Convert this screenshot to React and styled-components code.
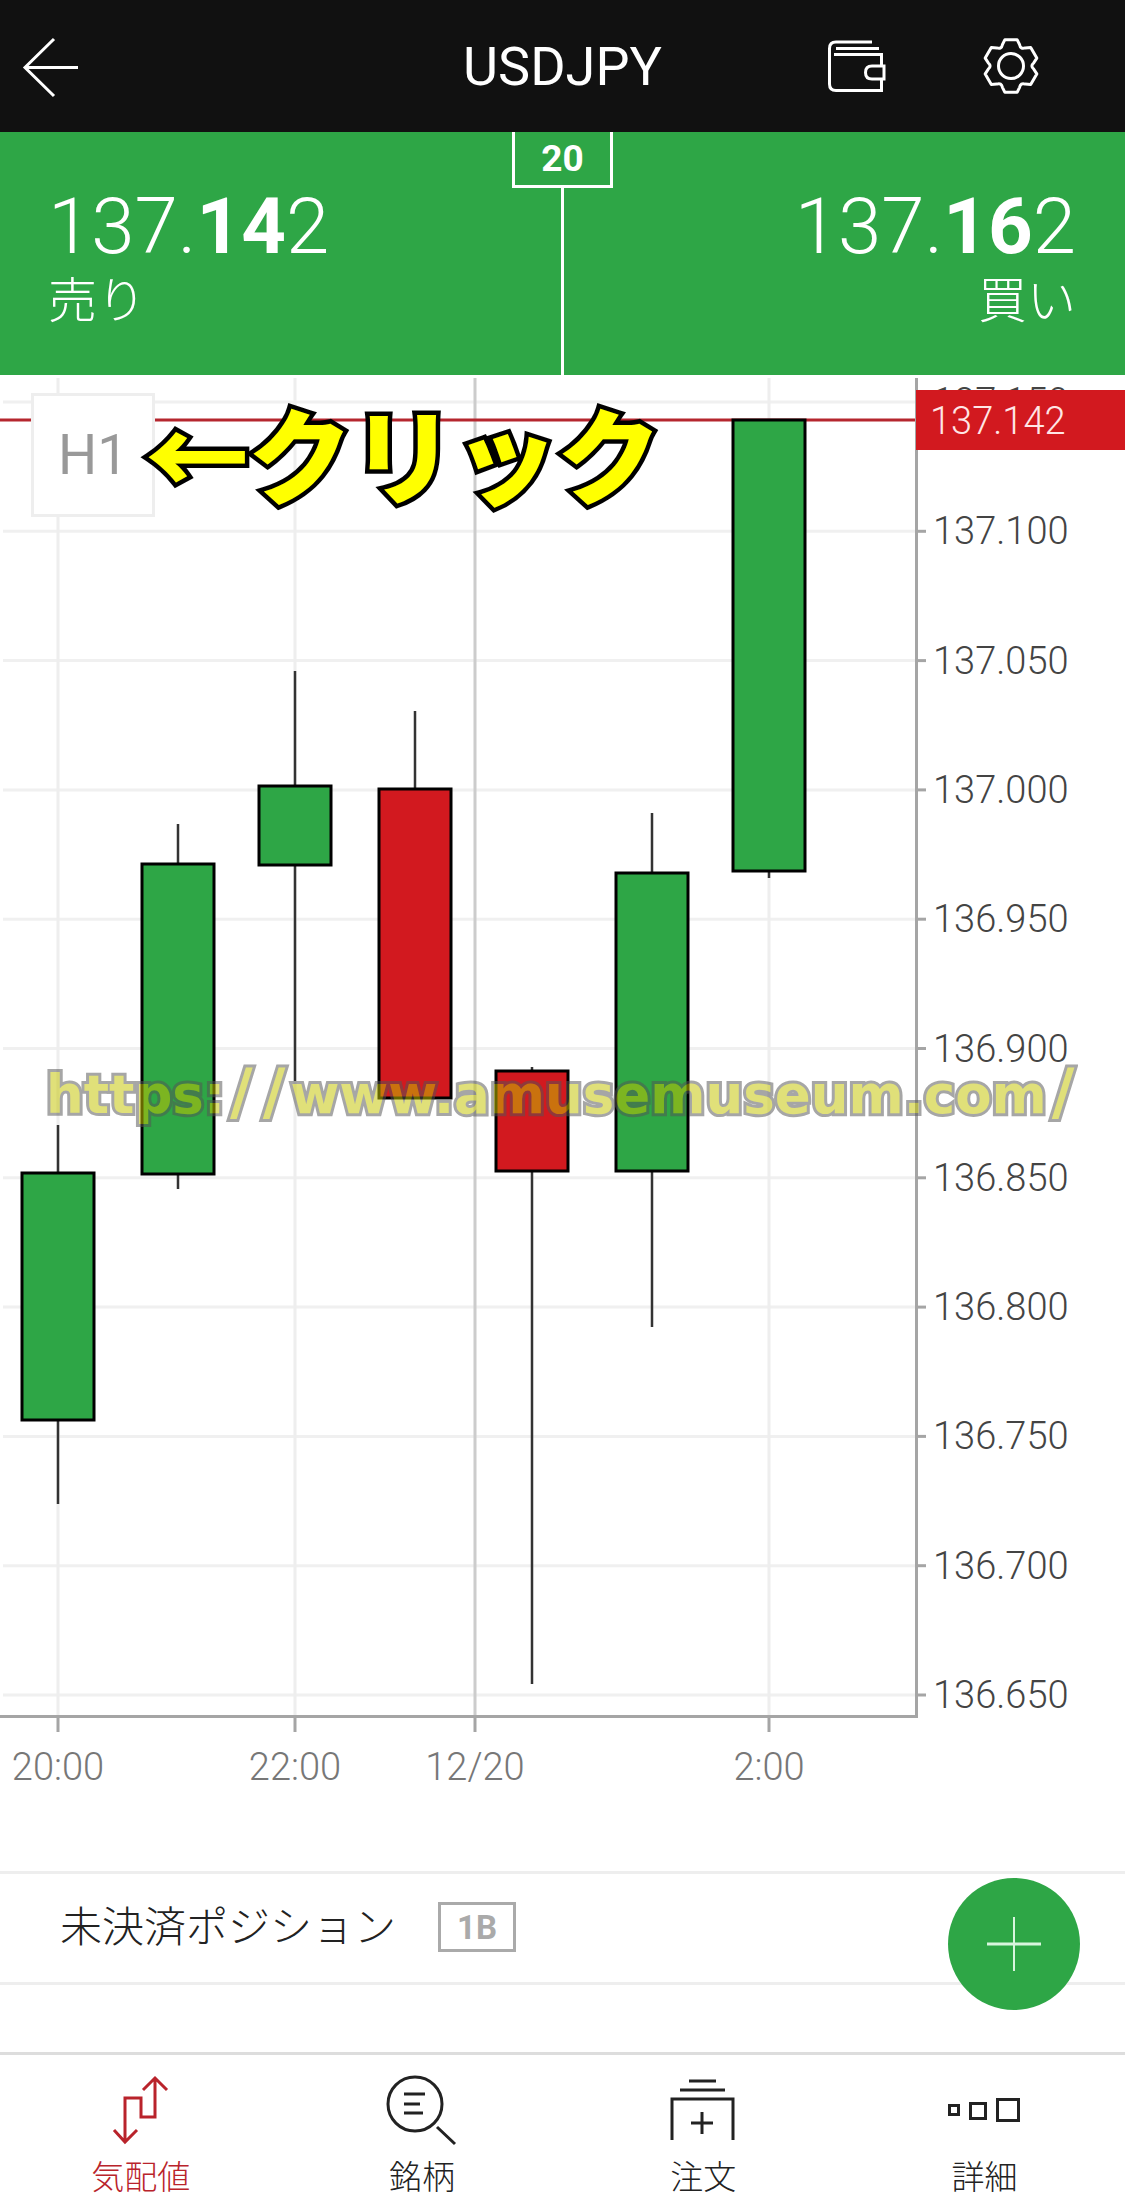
import React from 'react'
import styled, { createGlobalStyle } from 'styled-components'

const GlobalStyle = createGlobalStyle`
  html, body { margin: 0; padding: 0; background: #fff; }
  body { font-family: Roboto, "Noto Sans CJK JP", sans-serif; }
`

const GREEN = '#2ea646'
const RED = '#d2191f'

const Page = styled.div`
  position: relative;
  width: 1125px;
  height: 2202px;
  display: flex;
  flex-direction: column;
  overflow: hidden;
  background: #fff;
`

const Header = styled.header`
  height: 132px;
  background: #111;
  display: grid;
  grid-template-columns: 1fr auto 1fr;
  align-items: center;
  color: #fff;
`

const Title = styled.h1`
  margin: 0;
  font-size: 54px;
  font-weight: 400;
`

const HeaderLeft = styled.div`
  display: flex;
  align-items: center;
`

const HeaderRight = styled.div`
  display: flex;
  justify-content: flex-end;
  align-items: center;
  gap: 95px;
  padding-right: 84px;
`

const QuotePanel = styled.section`
  position: relative;
  height: 243px;
  background: ${GREEN};
  color: #fff;
  display: flex;
  justify-content: space-between;
  padding: 50px 49px 0 48px;
  box-sizing: border-box;
`

const Spread = styled.div`
  position: absolute;
  top: 0;
  left: 512px;
  width: 101px;
  height: 56px;
  box-sizing: border-box;
  border: 3px solid #fff;
  border-top: 0;
  display: flex;
  align-items: center;
  justify-content: center;
  font-size: 37px;
  font-weight: 700;
`

const Divider = styled.div`
  position: absolute;
  top: 56px;
  bottom: 0;
  left: 561px;
  width: 3px;
  background: #fff;
`

const Quote = styled.div`
  display: flex;
  flex-direction: column;
  align-items: ${props => (props.$right ? 'flex-end' : 'flex-start')};
`

const Price = styled.div`
  font-size: 78px;
  line-height: 90px;
  font-weight: 300;
  b { font-weight: 700; }
`

const Side = styled.div`
  font-size: 49px;
  line-height: 60px;
  font-weight: 300;
`

const ChartArea = styled.section`
  position: relative;
  height: 1496px;
`

const ChartSvg = styled.svg`
  display: block;
`

const AxisText = styled.text`
  font-family: Roboto, sans-serif;
  font-size: 38px;
  font-weight: 300;
  fill: ${props => props.$color};
`

const FrameButton = styled.div`
  position: absolute;
  left: 31px;
  top: 18px;
  width: 124px;
  height: 124px;
  box-sizing: border-box;
  border: 3px solid #eee;
  background: #fff;
  display: flex;
  align-items: center;
  justify-content: center;
  color: #999;
  font-size: 55px;
`

const ClickNote = styled.div`
  position: absolute;
  left: 145px;
  top: 12px;
  font-family: "Noto Sans CJK JP", sans-serif;
  font-size: 104px;
  line-height: 130px;
  font-weight: 900;
  letter-spacing: -1px;
  white-space: nowrap;
  color: #ff0;
  -webkit-text-stroke: 9px #000;
  paint-order: stroke fill;
`

const Watermark = styled.div`
  position: absolute;
  left: 46px;
  top: 685px;
  font-family: "DejaVu Sans", sans-serif;
  font-size: 53px;
  line-height: 70px;
  font-weight: 700;
  white-space: nowrap;
  color: #c4c400;
  -webkit-text-stroke: 6px #555;
  paint-order: stroke fill;
  opacity: 0.52;
`

const Slash = styled.span`
  font-size: 62px;
  line-height: 1;
  margin: 0 5px;
`

const PositionRow = styled.div`
  height: 114px;
  box-sizing: border-box;
  border-top: 3px solid #eee;
  border-bottom: 3px solid #eee;
  display: flex;
  align-items: center;
  gap: 42px;
  padding: 0 0 10px 60px;
`

const PositionLabel = styled.span`
  font-size: 42px;
  color: #222;
  font-weight: 300;
`

const Badge = styled.span`
  width: 78px;
  height: 50px;
  margin-top: 8px;
  box-sizing: border-box;
  border: 3px solid #aaa;
  display: flex;
  align-items: center;
  justify-content: center;
  color: #aaa;
  font-size: 33px;
  font-weight: 700;
`

const Fab = styled.button`
  position: absolute;
  left: 948px;
  top: 1878px;
  width: 132px;
  height: 132px;
  padding: 0;
  border: 0;
  border-radius: 50%;
  background: ${GREEN};
  display: flex;
  align-items: center;
  justify-content: center;
`

const Spacer = styled.div`
  flex: 1;
`

const Nav = styled.nav`
  height: 150px;
  box-sizing: border-box;
  border-top: 3px solid #ddd;
  display: grid;
  grid-template-columns: repeat(4, 1fr);
`

const NavItem = styled.div`
  display: flex;
  flex-direction: column;
  align-items: center;
  color: ${props => (props.$active ? '#b9232b' : '#222')};
`

const NavIcon = styled.svg`
  display: block;
  width: 100px;
  height: 76px;
  margin-top: 18px;
  fill: none;
  stroke: currentColor;
  stroke-width: 3;
`

const NavLabel = styled.span`
  font-size: 33px;
  line-height: 40px;
  margin-top: 9px;
  font-weight: 300;
`

const HeaderSvg = styled.svg`
  display: block;
  fill: none;
  stroke: #fff;
  stroke-width: 3;
`

// y position of each price line on the chart, relative to the section
const priceLines = ['137.150', '137.100', '137.050', '137.000', '136.950', '136.900', '136.850', '136.800', '136.750', '136.700', '136.650']
const priceY = i => 27 + i * 129.3
const timeLines = [
  { x: 58, label: '20:00' },
  { x: 295, label: '22:00' },
  { x: 475, label: '12/20', strong: true },
  { x: 769, label: '2:00' },
]

// all in page pixels, minus the section top when drawn
const candles = [
  { x: 58, top: 1173, bottom: 1420, hi: 1125, lo: 1504, color: GREEN },
  { x: 178, top: 864, bottom: 1174, hi: 824, lo: 1189, color: GREEN },
  { x: 295, top: 786, bottom: 865, hi: 671, lo: 1081, color: GREEN },
  { x: 415, top: 789, bottom: 1098, hi: 711, lo: 1098, color: RED },
  { x: 532, top: 1071, bottom: 1171, hi: 1067, lo: 1684, color: RED },
  { x: 652, top: 873, bottom: 1171, hi: 813, lo: 1327, color: GREEN },
  { x: 769, top: 420, bottom: 871, hi: 420, lo: 878, color: GREEN },
]
const TOP = 375

const gearPath = () => {
  const cx = 30, cy = 30, outer = 27, valley = 19, inner = 21
  const pt = (r, deg) => {
    const a = (deg * Math.PI) / 180
    return `${(cx + r * Math.cos(a)).toFixed(1)} ${(cy + r * Math.sin(a)).toFixed(1)}`
  }
  let d = ''
  for (let i = 0; i < 6; i++) {
    const a = -90 + i * 60
    d += `${i === 0 ? 'M' : 'L'}${pt(outer, a - 13)} L${pt(outer, a + 13)} L${pt(inner + 2, a + 22)} Q${pt(valley, a + 30)} ${pt(inner + 2, a + 38)} `
  }
  return d + 'Z'
}

const Chart = () => (
  <ChartSvg width="1125" height="1496" viewBox="0 0 1125 1496">
    {priceLines.map((p, i) => (
      <line key={p} x1="3" x2="916" y1={priceY(i)} y2={priceY(i)} stroke="#f0f0f0" strokeWidth="3" />
    ))}
    {timeLines.map(t => (
      <line key={t.x} x1={t.x} x2={t.x} y1="3" y2="1341" stroke={t.strong ? '#ccc' : '#eee'} strokeWidth="3" />
    ))}
    <line x1="0" x2="916" y1="45" y2="45" stroke="#b5262e" strokeWidth="3" />
    {candles.map(c => (
      <g key={c.x}>
        <line x1={c.x} x2={c.x} y1={c.hi - TOP} y2={c.lo - TOP} stroke="#333" strokeWidth="2.5" />
        <rect x={c.x - 36} y={c.top - TOP} width="72" height={c.bottom - c.top} fill={c.color} stroke="#000" strokeWidth="3" />
      </g>
    ))}
    <path d="M916.5 3V1341.5H0" fill="none" stroke="#a5a5a5" strokeWidth="3" />
    {priceLines.map((p, i) => (
      <g key={p}>
        <line x1="916" x2="926" y1={priceY(i)} y2={priceY(i)} stroke="#a5a5a5" strokeWidth="3" />
        <AxisText x="933" y={priceY(i) + 13} $color="#444">{p}</AxisText>
      </g>
    ))}
    {timeLines.map(t => (
      <g key={t.x}>
        <line x1={t.x} x2={t.x} y1="1341" y2="1357" stroke="#a5a5a5" strokeWidth="3" />
        <AxisText x={t.x} y="1405" textAnchor="middle" $color="#777">{t.label}</AxisText>
      </g>
    ))}
    <rect x="916" y="15" width="209" height="60" fill={RED} />
    <AxisText x="930" y="59" $color="#ffe6e6">137.142</AxisText>
  </ChartSvg>
)

const App = () => (
  <Page>
    <GlobalStyle />
    <Header>
      <HeaderLeft>
        <HeaderSvg width="100" height="132" viewBox="0 0 100 132">
          <path d="M54 39L25 67.5L54 96M25 67.5H78" />
        </HeaderSvg>
      </HeaderLeft>
      <Title>USDJPY</Title>
      <HeaderRight>
        <HeaderSvg width="60" height="56" viewBox="826 36 60 56">
          <path d="M872 40H836Q829.5 40 829.5 46.5V82Q829.5 88.5 836 88.5H881.5V77M836 46.5H879M834 52.5H881.5V64" />
          <path d="M884 64H872Q865.5 64 865.5 70.5Q865.5 77 872 77H884Z" />
        </HeaderSvg>
        <HeaderSvg width="60" height="60" viewBox="0 0 60 60">
          <path d={gearPath()} strokeLinejoin="round" />
          <circle cx="30" cy="30" r="12.5" />
        </HeaderSvg>
      </HeaderRight>
    </Header>

    <QuotePanel>
      <Spread>20</Spread>
      <Divider />
      <Quote>
        <Price>137.<b>14</b>2</Price>
        <Side>売り</Side>
      </Quote>
      <Quote $right>
        <Price>137.<b>16</b>2</Price>
        <Side>買い</Side>
      </Quote>
    </QuotePanel>

    <ChartArea>
      <Chart />
      <FrameButton>H1</FrameButton>
      <ClickNote>←クリック</ClickNote>
      <Watermark>https:<Slash>/</Slash><Slash>/</Slash>www.amusemuseum.com<Slash>/</Slash></Watermark>
    </ChartArea>

    <PositionRow>
      <PositionLabel>未決済ポジション</PositionLabel>
      <Badge>1B</Badge>
    </PositionRow>
    <Spacer />

    <Nav>
      <NavItem $active>
        <NavIcon viewBox="90 2073 100 76">
          <path d="M154 2078V2117H140V2098H124V2142M142 2090L154 2078L166 2090M113 2130L124 2142L136 2130" />
        </NavIcon>
        <NavLabel>気配値</NavLabel>
      </NavItem>
      <NavItem>
        <NavIcon viewBox="373 2073 100 76">
          <circle cx="416" cy="2104" r="27" />
          <path d="M405 2094H426M405 2104H421M405 2113H424M438 2127L456 2144" />
        </NavIcon>
        <NavLabel>銘柄</NavLabel>
      </NavItem>
      <NavItem>
        <NavIcon viewBox="653 2073 100 76">
          <path d="M689 2081H716M680 2090H725M672 2140V2099H733V2140M691 2123H713M702 2112V2134" />
        </NavIcon>
        <NavLabel>注文</NavLabel>
      </NavItem>
      <NavItem>
        <NavIcon viewBox="934 2073 100 76">
          <rect x="949.5" y="2105.5" width="9" height="9" />
          <rect x="970.5" y="2103.5" width="15" height="15" />
          <rect x="997.5" y="2099.5" width="21" height="21" />
        </NavIcon>
        <NavLabel>詳細</NavLabel>
      </NavItem>
    </Nav>

    <Fab aria-label="add">
      <svg width="54" height="54" viewBox="0 0 54 54">
        <path d="M0 27H54" stroke="#d8f5de" strokeWidth="3" />
        <path d="M27 0V54" stroke="#d8f5de" strokeWidth="2" />
      </svg>
    </Fab>
  </Page>
)

export default App
